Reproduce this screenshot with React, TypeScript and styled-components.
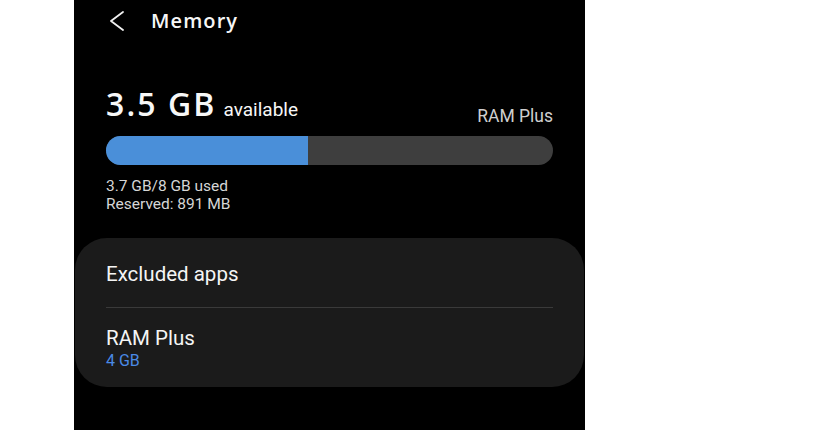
import React from 'react';
import styled, { createGlobalStyle } from 'styled-components';

const GlobalStyle = createGlobalStyle`
  html, body {
    margin: 0;
    padding: 0;
    background: #ffffff;
    font-family: Roboto, "Noto Sans", "Liberation Sans", sans-serif;
  }
`;

const Page = styled.div`
  display: flex;
  height: 430px;
  overflow: hidden;
`;

const Phone = styled.main`
  margin-left: 74px;
  width: 511px;
  height: 430px;
  background: #000000;
  color: #f7f7f7;
  display: flex;
  flex-direction: column;
`;

const Header = styled.header`
  height: 42px;
  display: flex;
  align-items: center;
  padding-left: 35px;
  gap: 25px;
`;

const BackButton = styled.button`
  background: none;
  border: none;
  padding: 0;
  width: 17px;
  height: 20px;
  display: flex;
  align-items: center;
  justify-content: center;
  color: #f0f0f0;
`;

const Title = styled.h1`
  margin: 0;
  font-family: "Open Sans", Roboto, sans-serif;
  font-size: 20px;
  line-height: 24px;
  font-weight: 600;
  letter-spacing: 0.055em;
`;

const Content = styled.section`
  padding: 0 32px;
  display: flex;
  flex-direction: column;
`;

const SummaryRow = styled.div`
  margin-top: 44px;
  display: flex;
  justify-content: space-between;
  align-items: flex-end;
`;

const Available = styled.div`
  display: flex;
  align-items: baseline;
  gap: 7px;
  line-height: 36px;
`;

const Amount = styled.span`
  font-family: "Open Sans", Roboto, sans-serif;
  font-size: 32px;
  font-weight: 600;
  letter-spacing: 0.065em;
`;

const AmountLabel = styled.span`
  font-size: 19px;
`;

const SideLabel = styled.span`
  font-size: 17.5px;
  line-height: 18px;
  margin-bottom: 3px;
  color: #cfcfcf;
`;

const Bar = styled.div`
  margin-top: 8px;
  height: 29px;
  border-radius: 15px;
  background: #3e3e3e;
  overflow: hidden;
  display: flex;
`;

const BarFill = styled.div`
  background: #4a8fd9;
  height: 100%;
`;

const Usage = styled.div`
  margin-top: 12px;
  font-size: 15.5px;
  line-height: 18px;
  color: #d6d6d6;
`;

const Card = styled.div`
  margin: 25px 1px 0;
  background: #1b1b1b;
  border-radius: 32px;
  padding: 0 31px;
`;

const Item = styled.div<{ $top: number; $bottom: number }>`
  padding: ${p => p.$top}px 0 ${p => p.$bottom}px;
  & + & {
    border-top: 1px solid #3a3a3a;
  }
`;

const ItemTitle = styled.div`
  font-size: 20.5px;
  line-height: 24px;
  color: #f5f5f5;
`;

const ItemValue = styled.div`
  margin-top: 2px;
  font-size: 16px;
  line-height: 18px;
  color: #4a8ae6;
`;

const ChevronLeft = () => (
  <svg width="17" height="20" viewBox="0 0 17 20" fill="none">
    <polyline
      points="14,1 2,10 14,19"
      stroke="currentColor"
      strokeWidth="1.8"
      strokeLinecap="round"
      strokeLinejoin="round"
    />
  </svg>
);

const used = 3.7;
const total = 8;

export default function App() {
  return (
    <>
      <GlobalStyle />
      <Page>
        <Phone>
          <Header>
            <BackButton aria-label="Back">
              <ChevronLeft />
            </BackButton>
            <Title>Memory</Title>
          </Header>
          <Content>
            <SummaryRow>
              <Available>
                <Amount>3.5 GB</Amount>
                <AmountLabel>available</AmountLabel>
              </Available>
              <SideLabel>RAM Plus</SideLabel>
            </SummaryRow>
            <Bar>
              <BarFill style={{ width: `${(used / total) * 97.5}%` }} />
            </Bar>
            <Usage>
              <div>3.7 GB/8 GB used</div>
              <div>Reserved: 891 MB</div>
            </Usage>
          </Content>
          <Card>
            <Item $top={24} $bottom={21}>
              <ItemTitle>Excluded apps</ItemTitle>
            </Item>
            <Item $top={18} $bottom={17}>
              <ItemTitle>RAM Plus</ItemTitle>
              <ItemValue>4 GB</ItemValue>
            </Item>
          </Card>
        </Phone>
      </Page>
    </>
  );
}
